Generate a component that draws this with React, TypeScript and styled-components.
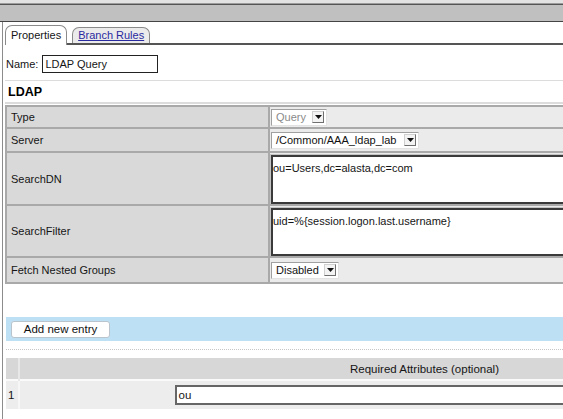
import * as React from 'react';
import styled, { createGlobalStyle } from 'styled-components';

const GlobalStyle = createGlobalStyle`
  html, body {
    margin: 0;
    padding: 0;
    background: #fff;
  }
  body {
    font-family: "Liberation Sans", Arial, sans-serif;
    font-size: 11px;
    color: #151515;
  }
`;

const Page = styled.div`
  width: 563px;
  height: 419px;
  overflow: hidden;
`;

const TopStrip = styled.div`
  height: 3px;
  background: #e3e3e3;
  border-bottom: 1px solid #9c9c9c;
`;

const TitleBar = styled.div`
  height: 16px;
  background: #c0c0c0;
  border-top: 1px solid #555;
  border-bottom: 1px solid #444;
`;

const Panel = styled.div`
  margin-left: 2px;
  border-left: 1px solid #8c8c8c;
  padding-left: 2px;
  min-height: 400px;
  width: 1000px;
`;

const TabBar = styled.div`
  display: flex;
  align-items: flex-end;
  gap: 5px;
  padding-top: 3px;
  height: 18px;
  border-bottom: 2px solid #555;
`;

const Tab = styled.div<{ $active?: boolean }>`
  box-sizing: border-box;
  height: ${p => (p.$active ? 20 : 16)}px;
  line-height: ${p => (p.$active ? 18 : 15)}px;
  padding: 0 5px;
  border: 1px solid #8a8a8a;
  border-bottom: none;
  border-radius: 7px 7px 0 0;
  background: ${p => (p.$active ? '#fff' : '#ebebeb')};
  margin-bottom: ${p => (p.$active ? -2 : 0)}px;
  position: relative;
  z-index: 1;
  font-size: 11px;
`;

const TabLink = styled.a`
  color: #2a2aa0;
  text-decoration: underline;
`;

const NameRow = styled.div`
  display: flex;
  align-items: center;
  gap: 4px;
  margin-top: 10px;
  padding-left: 1px;
`;

const NameInput = styled.div`
  box-sizing: border-box;
  width: 116px;
  height: 18px;
  line-height: 16px;
  border: 1px solid #222;
  padding: 0 2px;
  background: #fff;
`;

const Divider = styled.div<{ $thick?: boolean }>`
  margin-top: ${p => (p.$thick ? 0 : 7)}px;
  height: ${p => (p.$thick ? 2 : 1)}px;
  background: #dcdcdc;
`;

const SectionTitle = styled.div`
  height: 21px;
  line-height: 22px;
  padding-left: 3px;
  font-size: 12.5px;
  font-weight: bold;
  color: #000;
`;

const PropTable = styled.table`
  margin-top: 1px;
  width: 700px;
  border-collapse: collapse;
  border: 2px solid #a9a9a9;
`;

const LabelCell = styled.td`
  width: 257px;
  background: #d9d9d9;
  border: 2px solid #a9a9a9;
  padding: 0 0 0 4px;
  vertical-align: middle;
`;

const ValueCell = styled.td<{ $h: number }>`
  height: ${p => p.$h}px;
  background: #ebebeb;
  border: 2px solid #a9a9a9;
  padding: 0 0 0 1px;
  vertical-align: ${p => (p.$h > 30 ? 'top' : 'middle')};
`;

const SelectBox = styled.div<{ $w: number; $disabled?: boolean }>`
  box-sizing: border-box;
  display: flex;
  align-items: center;
  justify-content: space-between;
  width: ${p => p.$w}px;
  height: 17px;
  padding: 0 2px 0 4px;
  background: #fff;
  border: 1px solid #a0a0a0;
  border-right-color: #e2e2e2;
  border-bottom-color: #e2e2e2;
  color: ${p => (p.$disabled ? '#8a8a8a' : '#111')};
`;

const ArrowButton = styled.span`
  box-sizing: border-box;
  display: flex;
  align-items: center;
  justify-content: center;
  width: 12px;
  height: 12px;
  background: #f3f3f3;
  border: 1px solid #6f6f6f;
  border-top-color: #d0d0d0;
  border-left-color: #d0d0d0;
`;

const TextBox = styled.div<{ $h: number }>`
  box-sizing: border-box;
  margin-top: 2px;
  width: 420px;
  height: ${p => p.$h}px;
  padding: 5px 0;
  background: #fff;
  border: 2px solid #3a3a3a;
  border-right: none;
  box-shadow: 0 0 0 1px #c4c4c4;
`;

const ActionBar = styled.div`
  margin: 33px 0 0 1px;
  height: 24px;
  display: flex;
  align-items: center;
  padding-left: 5px;
  background: #bde0f5;
`;

const Button = styled.button`
  box-sizing: border-box;
  width: 99px;
  height: 17px;
  padding: 0;
  border: 1px solid #b9c4cc;
  border-radius: 3px;
  background: #fff;
  font-family: "Liberation Sans", Arial, sans-serif;
  font-size: 11.5px;
  color: #111;
`;

const DottedLine = styled.div`
  margin: 8px 0 0 1px;
  border-top: 1px dotted #c6c6c6;
`;

const AttrTable = styled.table`
  margin: 8px 0 0 1px;
  width: 823px;
  border-collapse: collapse;
`;

const HeadCell = styled.th<{ $narrow?: boolean }>`
  height: 21px;
  padding: 0;
  width: ${p => (p.$narrow ? '12px' : 'auto')};
  background: #d7d7d7;
  border-left: ${p => (p.$narrow ? 'none' : '2px solid #e8e8e8')};
  font-weight: normal;
  font-size: 11.5px;
  text-align: center;
`;

const RowCell = styled.td<{ $narrow?: boolean }>`
  height: 28px;
  padding: 0 0 0 ${p => (p.$narrow ? 2 : 0)}px;
  background: #ededed;
  border-top: 2px solid #fafafa;
  border-left: ${p => (p.$narrow ? 'none' : '2px solid #f6f6f6')};
  text-align: ${p => (p.$narrow ? 'left' : 'center')};
  font-size: 11.5px;
`;

const AttrInput = styled.div`
  box-sizing: border-box;
  display: inline-block;
  vertical-align: middle;
  width: 500px;
  height: 20px;
  line-height: 16px;
  padding: 0 2px;
  text-align: left;
  background: #fff;
  border: 2px solid #666;
  font-size: 11.5px;
`;

const Arrow = () => (
  <svg width="7" height="4" viewBox="0 0 7 4">
    <path d="M0 0 H7 L3.5 4 Z" fill="#111" />
  </svg>
);

const Select = ({ value, width, disabled }: { value: string; width: number; disabled?: boolean }) => (
  <SelectBox $w={width} $disabled={disabled}>
    <span>{value}</span>
    <ArrowButton><Arrow /></ArrowButton>
  </SelectBox>
);

const rows = [
  { label: 'Type', h: 20, content: <Select value="Query" width={56} disabled /> },
  { label: 'Server', h: 22, content: <Select value="/Common/AAA_ldap_lab" width={148} /> },
  { label: 'SearchDN', h: 51, content: <TextBox $h={49}>ou=Users,dc=alasta,dc=com</TextBox> },
  { label: 'SearchFilter', h: 50, content: <TextBox $h={48}>uid=%{'{'}session.logon.last.username{'}'}</TextBox> },
  { label: 'Fetch Nested Groups', h: 24, content: <Select value="Disabled" width={68} /> },
];

export default function App() {
  return (
    <Page>
      <GlobalStyle />
      <TopStrip />
      <TitleBar />
      <Panel>
        <TabBar>
          <Tab $active>Properties</Tab>
          <Tab><TabLink>Branch Rules</TabLink></Tab>
        </TabBar>
        <NameRow>
          <span>Name:</span>
          <NameInput>LDAP Query</NameInput>
        </NameRow>
        <Divider />
        <SectionTitle>LDAP</SectionTitle>
        <Divider $thick />
        <PropTable>
          <tbody>
            {rows.map(r => (
              <tr key={r.label}>
                <LabelCell>{r.label}</LabelCell>
                <ValueCell $h={r.h}>{r.content}</ValueCell>
              </tr>
            ))}
          </tbody>
        </PropTable>
        <ActionBar>
          <Button>Add new entry</Button>
        </ActionBar>
        <DottedLine />
        <AttrTable>
          <tbody>
            <tr>
              <HeadCell $narrow />
              <HeadCell>Required Attributes (optional)</HeadCell>
            </tr>
            <tr>
              <RowCell $narrow>1</RowCell>
              <RowCell><AttrInput>ou</AttrInput></RowCell>
            </tr>
          </tbody>
        </AttrTable>
      </Panel>
    </Page>
  );
}
